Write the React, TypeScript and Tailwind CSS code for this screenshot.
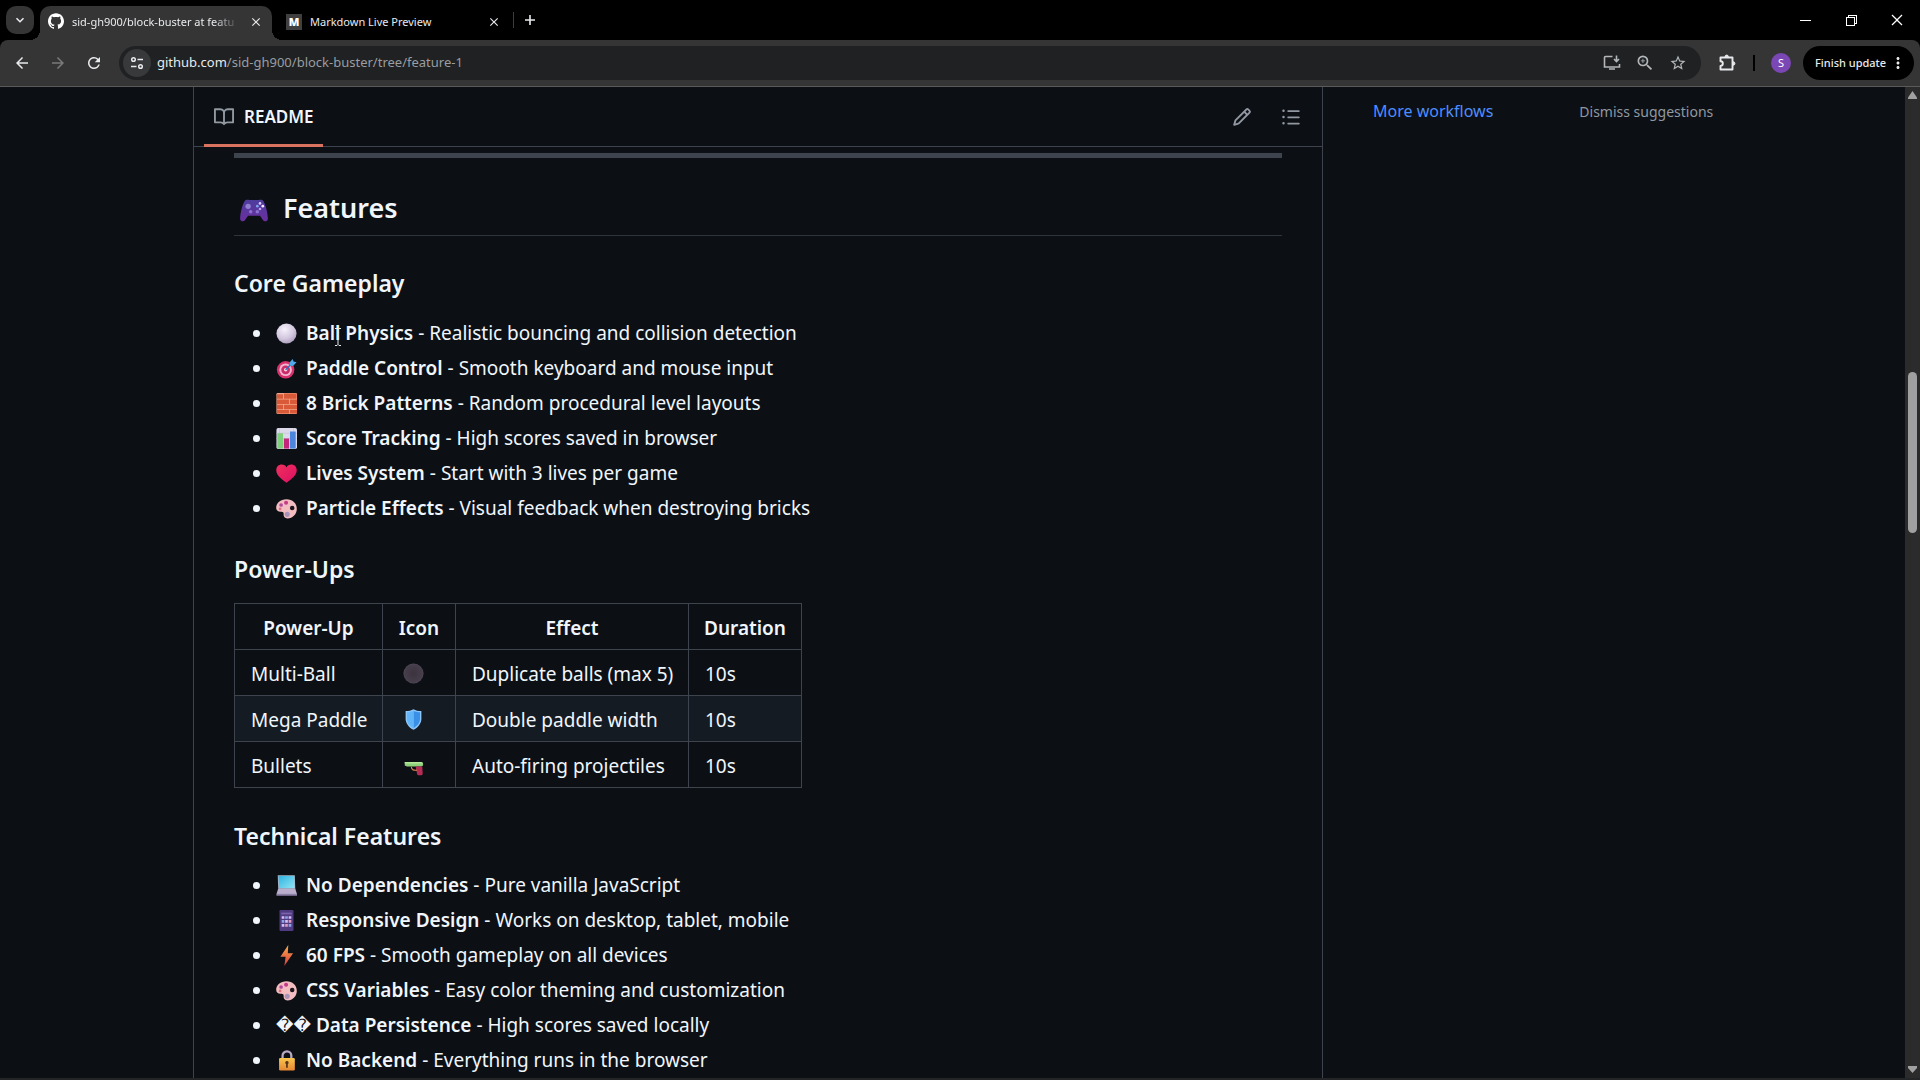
import type { ReactNode } from 'react';
import { MdArrowBack, MdArrowForward, MdClose, MdMoreVert, MdRefresh, MdStarBorder, MdZoomIn } from 'react-icons/md';
import { VscChromeClose, VscChromeMinimize, VscChromeRestore } from 'react-icons/vsc';
import { SiGithub } from 'react-icons/si';

type EmojiName =
  | 'gamepad'
  | 'ball'
  | 'target'
  | 'brick'
  | 'chart'
  | 'heart'
  | 'palette'
  | 'blackBall'
  | 'shield'
  | 'gun'
  | 'laptop'
  | 'phone'
  | 'bolt'
  | 'lock';

type Feature = { icon: EmojiName | null; name: string; text: string };

const coreGameplay: Feature[] = [
  { icon: 'ball', name: 'Ball Physics', text: 'Realistic bouncing and collision detection' },
  { icon: 'target', name: 'Paddle Control', text: 'Smooth keyboard and mouse input' },
  { icon: 'brick', name: '8 Brick Patterns', text: 'Random procedural level layouts' },
  { icon: 'chart', name: 'Score Tracking', text: 'High scores saved in browser' },
  { icon: 'heart', name: 'Lives System', text: 'Start with 3 lives per game' },
  { icon: 'palette', name: 'Particle Effects', text: 'Visual feedback when destroying bricks' },
];

const technicalFeatures: Feature[] = [
  { icon: 'laptop', name: 'No Dependencies', text: 'Pure vanilla JavaScript' },
  { icon: 'phone', name: 'Responsive Design', text: 'Works on desktop, tablet, mobile' },
  { icon: 'bolt', name: '60 FPS', text: 'Smooth gameplay on all devices' },
  { icon: 'palette', name: 'CSS Variables', text: 'Easy color theming and customization' },
  { icon: null, name: 'Data Persistence', text: 'High scores saved locally' },
  { icon: 'lock', name: 'No Backend', text: 'Everything runs in the browser' },
];

const powerUps: { name: string; icon: EmojiName; effect: string; duration: string }[] = [
  { name: 'Multi-Ball', icon: 'blackBall', effect: 'Duplicate balls (max 5)', duration: '10s' },
  { name: 'Mega Paddle', icon: 'shield', effect: 'Double paddle width', duration: '10s' },
  { name: 'Bullets', icon: 'gun', effect: 'Auto-firing projectiles', duration: '10s' },
];

const octicons = {
  book: 'M0 1.750A.75.75 0 0 1 .75 1h4.253c1.227 0 2.317.59 3 1.501A3.743 3.743 0 0 1 11.006 1h4.245a.75.75 0 0 1 .75.75v10.500a.75.75 0 0 1-.75.75h-4.507a2.250 2.250 0 0 0-1.591.659l-.622.621a.75.75 0 0 1-1.060 0l-.622-.621A2.250 2.250 0 0 0 5.258 13H.75a.75.75 0 0 1-.75-.75Zm7.251 10.324.004-5.073-.002-2.253A2.250 2.250 0 0 0 5.003 2.500H1.500v9h3.757a3.750 3.750 0 0 1 1.994.574ZM8.755 4.750l-.004 7.322a3.752 3.752 0 0 1 1.992-.572H14.500v-9h-3.495a2.250 2.250 0 0 0-2.250 2.250Z',
  pencil: 'M11.013 1.427a1.750 1.750 0 0 1 2.474 0l1.086 1.086a1.750 1.750 0 0 1 0 2.474l-8.610 8.610c-.21.21-.47.364-.756.445l-3.251.93a.75.75 0 0 1-.927-.928l.929-3.250c.081-.286.235-.547.445-.758l8.610-8.610Zm.176 4.823L9.750 4.810l-6.286 6.287a.253.253 0 0 0-.064.108l-.558 1.953 1.953-.558a.253.253 0 0 0 .108-.064Zm1.238-3.763a.25.25 0 0 0-.354 0L10.811 3.750l1.439 1.440 1.263-1.263a.25.25 0 0 0 0-.354Z',
  list: 'M5.750 2.500h8.500a.75.75 0 0 1 0 1.500h-8.500a.75.75 0 0 1 0-1.500Zm0 5h8.500a.75.75 0 0 1 0 1.500h-8.500a.75.75 0 0 1 0-1.500Zm0 5h8.500a.75.75 0 0 1 0 1.500h-8.500a.75.75 0 0 1 0-1.500ZM2 14a1 1 0 1 1 0-2 1 1 0 0 1 0 2Zm1-6a1 1 0 1 1-2 0 1 1 0 0 1 2 0ZM2 4a1 1 0 1 1 0-2 1 1 0 0 1 0 2Z',
};

const emojiArt: Record<EmojiName, ReactNode> = {
  gamepad: (
    <>
      <path d="M5 4.500C5.800 3.200 7.500 3.400 8.500 3.800h7c1-.4 2.700-.6 3.500.7 1.800 3 3.200 8.500 3.400 13 .1 2.500-2.400 3-3.700 1.200L16.500 15.500h-9l-2.200 3.200C4 20.500 1.500 20 1.600 17.500 1.800 13 3.200 7.500 5 4.500Z" fill="url(#em-purple)" />
      <circle cx="7.600" cy="8.500" r="2" fill="#8f7fd0" />
      <circle cx="16.500" cy="6.300" r="1" fill="#d9c8ff" />
      <circle cx="18.600" cy="8.400" r="1" fill="#f3ecff" />
      <circle cx="14.500" cy="8.400" r="1" fill="#7fa6f0" />
      <circle cx="16.500" cy="10.500" r="1" fill="#b9a0f5" />
      <circle cx="9.500" cy="12.500" r="1.300" fill="#8a72cf" />
      <circle cx="14.500" cy="12.500" r="1.300" fill="#8a72cf" />
    </>
  ),
  ball: <circle cx="12" cy="12" r="11.500" fill="url(#em-white)" />,
  target: (
    <>
      <circle cx="11" cy="13.500" r="10" fill="#d8326e" />
      <circle cx="11" cy="13.500" r="7.200" fill="#f0b4cd" />
      <circle cx="11" cy="13.500" r="5" fill="#c92c68" />
      <circle cx="11" cy="13.500" r="2" fill="#f6cfe0" />
      <path d="m11 13.500 8-8" stroke="#2f6fc0" strokeWidth="1.600" />
      <path d="m15.500 5 3.500-4 1 3 3.500.8-4 4.200-3.500-.5Z" fill="#4fa8ea" />
    </>
  ),
  brick: (
    <>
      <rect x="0.500" y="0" width="23.500" height="24" rx="1.500" fill="#f6a48a" />
      <path d="M1 1.500h7v5H1zM9 .5h14.500v6H9zM1 7.500h14v5H1zM16 7.500h8v5h-8zM1 13.500h7v5H1zM9 13.500h15v5H9zM1 19.500h14v4H1zM16 19.500h8v4h-8z" fill="#d85a38" />
    </>
  ),
  chart: (
    <>
      <rect x="0.500" y="0" width="23.500" height="24" rx="2" fill="#dcd9ea" />
      <path d="M4 0v24M20 0v24M.5 6H24M.5 12H24M.5 18H24" stroke="#c3bfd8" strokeWidth=".7" />
      <path d="M1.500 6h6.500v17.500H1.500z" fill="#7fd07c" />
      <path d="M9 12h6v11.500H9z" fill="#c2277c" />
      <path d="M16 4h6.500v19.500H16z" fill="#4b86dc" />
    </>
  ),
  heart: <path d="M12 22.500C7 19 .3 14.200.3 8.200.3 4.300 3.200 1.800 6.500 1.800 9 1.800 11 3 12 5 13 3 15 1.800 17.500 1.800c3.300 0 6.200 2.500 6.200 6.400C23.700 14.200 17 19 12 22.500Z" fill="url(#em-red)" />,
  palette: (
    <>
      <path d="M12 1.500C5 1.500.2 6.200.2 11c0 3.600 2.600 4.900 5.700 4.600 2-.2 3 .8 2.800 2.500-.3 3 1 5.200 4.300 5.200 6.200 0 10.800-5.200 10.800-10.800C23.800 6 18.700 1.500 12 1.500Z" fill="#f3bcc0" />
      <circle cx="18.500" cy="11.500" r="2.600" fill="#1c1418" />
      <circle cx="11.500" cy="5.500" r="2.300" fill="#c43a86" />
      <circle cx="5.800" cy="8" r="2.100" fill="#b0489c" />
      <circle cx="4.700" cy="12.500" r="1.600" fill="#d9737f" />
      <circle cx="12.800" cy="18.700" r="2.900" fill="#a792b8" />
    </>
  ),
  blackBall: <circle cx="12" cy="12" r="11.500" fill="url(#em-black)" />,
  shield: (
    <>
      <path d="M12 .2c2.500 1.600 5.500 2 9 2.200v9c0 5-4 10-9 12.400-5-2.400-9-7.400-9-12.400v-9C6.500 2.200 9.500 1.800 12 .2Z" fill="#8cc6fa" />
      <path d="M12 2c2 1.200 4.700 1.600 7.400 1.800v7.700c0 4.200-3 8-7.400 10.500Z" fill="#3a8fe6" />
      <path d="M12 2v20c-4.400-2.500-7.400-6.300-7.400-10.500V3.800C7.300 3.600 10 3.200 12 2Z" fill="#5fb5f8" />
    </>
  ),
  gun: (
    <>
      <path d="M2 8h18.500a2.500 2.500 0 0 1 0 5.200H4.500L2 12Z" fill="#8fd07a" />
      <path d="M2 8h18.500a2.500 2.500 0 0 1 2.300 1.800H2Z" fill="#b4e89b" />
      <path d="M14.500 13.200H22l.5 8c.1 1.200-.6 1.800-1.500 1.800h-3.500c-.8 0-1.300-.5-1.400-1.200Z" fill="#b52c55" />
      <path d="M9.500 13.500c.2 3.200 2.500 4.500 6.500 3.800" stroke="#d98a58" strokeWidth="1.300" fill="none" />
    </>
  ),
  laptop: (
    <>
      <path d="M2 .3h19.500l.5 15.500H2.500Z" fill="#a9b6c9" />
      <path d="M3 1.100h17.700l.4 14H3.500Z" fill="url(#em-screen)" />
      <path d="M2.500 15.500H22L24 22H.5Z" fill="#b9aecb" />
      <path d="M.5 21.500H24v2.200H.5Z" fill="#8d81a8" />
    </>
  ),
  phone: (
    <>
      <rect x="4" y="0" width="16" height="24" rx="1.500" fill="#513b80" />
      <path d="M6 3h12v2H6z" fill="#7a63ad" />
      <path d="M6.500 7h3v3h-3zM14.500 7h3v3h-3zM10.500 11.500h3v3h-3zM6.500 16h3v3h-3z" fill="#d4bff2" />
      <path d="M10.500 7h3v3h-3zM6.500 11.500h3v3h-3zM14.500 16h3v3h-3z" fill="#8fa5e8" />
      <path d="M14.500 11.500h3v3h-3zM10.500 16h3v3h-3z" fill="#e09ac0" />
    </>
  ),
  bolt: <path d="M14 0 5 13.500h6L9.500 24 19.500 9.500h-6Z" fill="url(#em-fire)" />,
  lock: (
    <>
      <path d="M7.500 10V6.500a5 5 0 0 1 10 0V10" stroke="#b8a9c4" strokeWidth="2.600" fill="none" />
      <rect x="3.500" y="9" width="18" height="14.500" rx="1.500" fill="url(#em-gold)" />
      <path d="M12.500 12.500a2 2 0 0 1 1 3.700v4h-2v-4a2 2 0 0 1 1-3.700Z" fill="#5b341c" />
    </>
  ),
};

function EmojiGradients() {
  return (
    <svg className="absolute size-0" aria-hidden="true">
      <defs>
        <linearGradient id="em-purple" x1="0" y1="0" x2="0" y2="1">
          <stop offset="0" stopColor="#4d3d9c" />
          <stop offset="1" stopColor="#6a2fa0" />
        </linearGradient>
        <radialGradient id="em-white" cx=".4" cy=".3" r=".75">
          <stop offset="0" stopColor="#f6f0fb" />
          <stop offset=".6" stopColor="#d3c8df" />
          <stop offset="1" stopColor="#a99bbb" />
        </radialGradient>
        <radialGradient id="em-black" cx=".5" cy=".5" r=".6">
          <stop offset="0" stopColor="#3b343f" />
          <stop offset=".7" stopColor="#453e4a" />
          <stop offset="1" stopColor="#5b5361" />
        </radialGradient>
        <linearGradient id="em-red" x1="0" y1="0" x2="1" y2="1">
          <stop offset="0" stopColor="#f0305f" />
          <stop offset="1" stopColor="#dc0f62" />
        </linearGradient>
        <linearGradient id="em-screen" x1="0" y1="0" x2="1" y2="1">
          <stop offset="0" stopColor="#2fb4e0" />
          <stop offset="1" stopColor="#8fe4f5" />
        </linearGradient>
        <linearGradient id="em-fire" x1="0" y1="0" x2="0" y2="1">
          <stop offset="0" stopColor="#f8ac4c" />
          <stop offset="1" stopColor="#d93a3c" />
        </linearGradient>
        <linearGradient id="em-gold" x1="0" y1="0" x2="0" y2="1">
          <stop offset="0" stopColor="#fbc64e" />
          <stop offset="1" stopColor="#e58732" />
        </linearGradient>
      </defs>
    </svg>
  );
}

function Emoji({ name, className }: { name: EmojiName; className: string }) {
  return (
    <svg viewBox="0 0 24 24" className={className} aria-hidden="true">
      {emojiArt[name]}
    </svg>
  );
}

function Octicon({ name }: { name: keyof typeof octicons }) {
  return (
    <svg viewBox="0 0 16 16" className="size-5" fill="currentColor" aria-hidden="true">
      <path d={octicons[name]} />
    </svg>
  );
}

function SectionHeading({ children }: { children: ReactNode }) {
  return <h3 className="h-[31px] text-[23px] leading-[34px] font-semibold">{children}</h3>;
}

function FeatureList({ items }: { items: Feature[] }) {
  return (
    <ul className="flex flex-col gap-[5px] pl-[19px]">
      {items.map((item) => (
        <li key={item.name} className="flex h-[30px] items-center whitespace-pre">
          <span className="mr-4 size-[7px] rounded-full bg-[#f0f6fc]" />
          {item.icon ? (
            <Emoji name={item.icon} className="mr-[9px] size-[21px]" />
          ) : (
            <span className="mr-[5px] font-['DejaVu_Sans'] text-[17px]">��</span>
          )}
          <p>
            <strong className="font-semibold">{item.name}</strong> - {item.text}
          </p>
        </li>
      ))}
    </ul>
  );
}

function PowerUpTable() {
  const head = 'border border-[#3d444d] px-3 pt-0.5 font-semibold';
  const cell = 'border border-[#3d444d] px-4 pt-0.5';
  return (
    <table className="w-[568px] table-fixed border-collapse whitespace-nowrap">
      <colgroup>
        <col className="w-[148px]" />
        <col className="w-[73px]" />
        <col className="w-[233px]" />
        <col className="w-[113px]" />
      </colgroup>
      <thead>
        <tr className="h-[46px]">
          <th className={head}>Power-Up</th>
          <th className={head}>Icon</th>
          <th className={head}>Effect</th>
          <th className={head}>Duration</th>
        </tr>
      </thead>
      <tbody>
        {powerUps.map((row) => (
          <tr key={row.name} className="h-[46px] even:bg-[#151b23]">
            <td className={cell}>{row.name}</td>
            <td className="border border-[#3d444d] px-5 pt-0.5">
              <Emoji name={row.icon} className="size-[21px]" />
            </td>
            <td className={cell}>{row.effect}</td>
            <td className={cell}>{row.duration}</td>
          </tr>
        ))}
      </tbody>
    </table>
  );
}

function TabStrip() {
  return (
    <div className="flex h-10 items-end bg-black text-[11px] text-[#e8eaed]">
      <button aria-label="Search tabs" className="mb-1.5 ml-1.5 flex size-7 items-center justify-center rounded-[10px] bg-[#353535]">
        <svg viewBox="0 0 10 10" className="size-2.5" fill="none" stroke="currentColor" strokeWidth="1.600">
          <path d="m1.500 3.200 3.500 3.500 3.500-3.500" />
        </svg>
      </button>
      <div className="relative ml-1.5 flex h-[34px] w-[232px] items-center rounded-t-[10px] bg-[#353535] px-2">
        <span className="absolute bottom-0 -left-2.5 size-2.5 bg-[radial-gradient(circle_at_0_0,transparent_10px,#353535_10px)]" />
        <span className="absolute -right-2.5 bottom-0 size-2.5 bg-[radial-gradient(circle_at_100%_0,transparent_10px,#353535_10px)]" />
        <SiGithub className="mb-1 size-4 shrink-0 text-white" />
        <span className="mb-0.5 ml-2 w-[167px] whitespace-nowrap [mask-image:linear-gradient(to_right,black_85%,transparent)]">
          sid-gh900/block-buster at featu
        </span>
        <button aria-label="Close tab" className="mb-0.5 ml-2.5">
          <MdClose className="size-3.5" />
        </button>
      </div>
      <div className="flex h-[34px] w-[241px] items-center pl-[14px]">
        <span className="mb-0.5 flex size-4 items-center justify-center bg-[#3f3f3f] font-black text-white">M</span>
        <span className="mb-0.5 ml-2 grow whitespace-nowrap">Markdown Live Preview</span>
        <button aria-label="Close tab" className="mr-3 mb-0.5">
          <MdClose className="size-3.5" />
        </button>
      </div>
      <span className="mb-3 h-4 w-px bg-[#3c3c3c]" />
      <button aria-label="New tab" className="mb-3 ml-2">
        <svg viewBox="0 0 16 16" className="size-4" stroke="currentColor" strokeWidth="1.600">
          <path d="M8 3v10M3 8h10" />
        </svg>
      </button>
      <div className="mb-3 ml-auto flex items-center text-white">
        <button aria-label="Minimize" className="flex w-[46px] justify-center">
          <VscChromeMinimize className="size-4" />
        </button>
        <button aria-label="Restore" className="flex w-[46px] justify-center">
          <VscChromeRestore className="size-4" />
        </button>
        <button aria-label="Close" className="flex w-[46px] justify-center">
          <VscChromeClose className="size-4" />
        </button>
      </div>
    </div>
  );
}

function Toolbar() {
  return (
    <div className="bg-black">
      <div className="flex h-[47px] items-center rounded-t-lg border-b border-[#5a5a5a] bg-[#353535] text-[#e8eaed]">
        <button aria-label="Back" className="ml-[13px]">
          <MdArrowBack className="size-[18px]" />
        </button>
        <button aria-label="Forward" className="ml-[18px] text-[#7a7a7a]">
          <MdArrowForward className="size-[18px]" />
        </button>
        <button aria-label="Reload" className="ml-[18px]">
          <MdRefresh className="size-[18px]" />
        </button>
        <div className="ml-4 flex h-[34px] grow items-center rounded-full bg-[#1f2123] pr-[14px] pl-1 text-[13px]">
          <button aria-label="Site information" className="flex size-7 items-center justify-center rounded-full bg-[#37393b]">
            <svg viewBox="0 0 16 16" className="size-4" fill="none" stroke="currentColor" strokeWidth="1.500">
              <circle cx="4.500" cy="4.500" r="1.800" />
              <path d="M8.500 4.500H14M2 11.500h5.500" />
              <circle cx="11.500" cy="11.500" r="1.800" />
            </svg>
          </button>
          <p className="ml-1.5 grow whitespace-nowrap text-[#9a9da1]">
            <span className="text-[#e8eaed]">github.com</span>/sid-gh900/block-buster/tree/feature-1
          </p>
          <div className="flex items-center gap-[14px] text-[#b4b7ba]">
            <button aria-label="Install app">
              <svg viewBox="0 0 18 18" className="size-[18px]" fill="none" stroke="currentColor" strokeWidth="1.600">
                <path d="M9.500 2.500H2.500a1 1 0 0 0-1 1v9.500h15V10M13.500 1.500v6M11 5l2.500 2.500L16 5M6 15h6" />
              </svg>
            </button>
            <button aria-label="Zoom">
              <MdZoomIn className="size-5" />
            </button>
            <button aria-label="Bookmark this page">
              <MdStarBorder className="size-[18px]" />
            </button>
          </div>
        </div>
        <button aria-label="Extensions" className="ml-4">
          <svg viewBox="0 0 20 20" className="size-5" fill="none" stroke="currentColor" strokeWidth="1.900" strokeLinejoin="round">
            <path d="M3.500 4.500h12v12h-12v-3.600a2.300 2.300 0 0 0 0-4.600Z" />
            <path d="M8 3.800a1.700 1.700 0 0 1 3.400 0ZM16.200 8.800a1.700 1.700 0 0 1 0 3.400Z" fill="currentColor" strokeWidth="1" />
          </svg>
        </button>
        <span className="ml-4 h-4 w-0.5 bg-black" />
        <button aria-label="Profile" className="ml-4 flex size-5 items-center justify-center rounded-full bg-[#7b47b5] text-[11px] text-white">
          S
        </button>
        <button className="mr-1.5 ml-3 flex h-[34px] w-[111px] items-center justify-between rounded-full bg-black pr-[7px] pl-3 text-[11px] font-medium whitespace-nowrap text-[#e8eaed]">
          Finish update
          <MdMoreVert className="size-[18px] shrink-0" />
        </button>
      </div>
    </div>
  );
}

function Scrollbar() {
  return (
    <div className="flex w-[15px] shrink-0 flex-col items-center bg-[#2b2b2b]">
      <svg viewBox="0 0 9 8" className="mt-1 h-2 w-[9px]" fill="#a0a0a0">
        <path d="M4.500 0 9 6.500V8H0V6.500Z" />
      </svg>
      <span className="mt-[273px] h-[161px] w-[9px] rounded-full bg-[#a0a0a0]" />
      <svg viewBox="0 0 9 8" className="mt-auto mb-1 h-2 w-[9px]" fill="#a0a0a0">
        <path d="M0 0h9v2L4.500 7 0 2Z" />
      </svg>
    </div>
  );
}

export default function App() {
  return (
    <div className="flex h-screen flex-col overflow-hidden bg-[#0c1015] font-['Noto_Sans',sans-serif] text-[#f0f6fc]">
      <EmojiGradients />
      <TabStrip />
      <Toolbar />
      <div className="flex min-h-0 grow border-b-2 border-[#232527]">
        <div className="w-[193px] shrink-0" />
        <main className="flex min-w-0 grow flex-col border-x border-[#3d444d]">
          <div className="flex h-[60px] shrink-0 items-center border-b border-[#3d444d] pl-2.5 text-[#9198a1]">
            <button className="relative flex h-full w-[119px] items-center gap-2.5 pl-2.5">
              <Octicon name="book" />
              <span className="text-[17px] font-semibold text-[#f0f6fc]">README</span>
              <span className="absolute -bottom-px left-0 h-[3px] w-full bg-[#d9735f]" />
            </button>
            <button aria-label="Edit file" className="ml-auto">
              <Octicon name="pencil" />
            </button>
            <button aria-label="Outline" className="mr-[21px] ml-[29px]">
              <Octicon name="list" />
            </button>
          </div>
          <article className="min-h-0 grow overflow-hidden px-10 pt-1.5 text-[19px] leading-[30px]">
            <hr className="h-[5px] border-0 bg-[#3d444d]" />
            <h2 className="mt-[30px] mb-[30px] flex h-12 items-start border-b border-[#3d444d]/70 text-[27px] leading-10 font-semibold">
              <Emoji name="gamepad" className="mt-[7px] mr-[13px] ml-1 size-8" />
              Features
            </h2>
            <SectionHeading>Core Gameplay</SectionHeading>
            <div className="relative mt-[21px] mb-[29px]">
              <FeatureList items={coreGameplay} />
              <svg viewBox="0 0 8 18" className="absolute top-2.5 left-[100px] h-[18px] w-2" fill="none" stroke="#e8eaed">
                <path d="M1 .5h2l1 1 1-1h2M4 1.500v15M1 17.500h2l1-1 1 1h2" />
              </svg>
            </div>
            <SectionHeading>Power-Ups</SectionHeading>
            <div className="mt-5 mb-[31px]">
              <PowerUpTable />
            </div>
            <SectionHeading>Technical Features</SectionHeading>
            <div className="mt-5">
              <FeatureList items={technicalFeatures} />
            </div>
          </article>
        </main>
        <aside className="flex w-[582px] shrink-0 items-start gap-[86px] pt-3 pl-[50px] whitespace-nowrap">
          <a href="#workflows" className="text-[16px] leading-6 text-[#4c8dff]">
            More workflows
          </a>
          <button className="text-[14px] leading-[26px] text-[#9198a1]">Dismiss suggestions</button>
        </aside>
        <Scrollbar />
      </div>
    </div>
  );
}
